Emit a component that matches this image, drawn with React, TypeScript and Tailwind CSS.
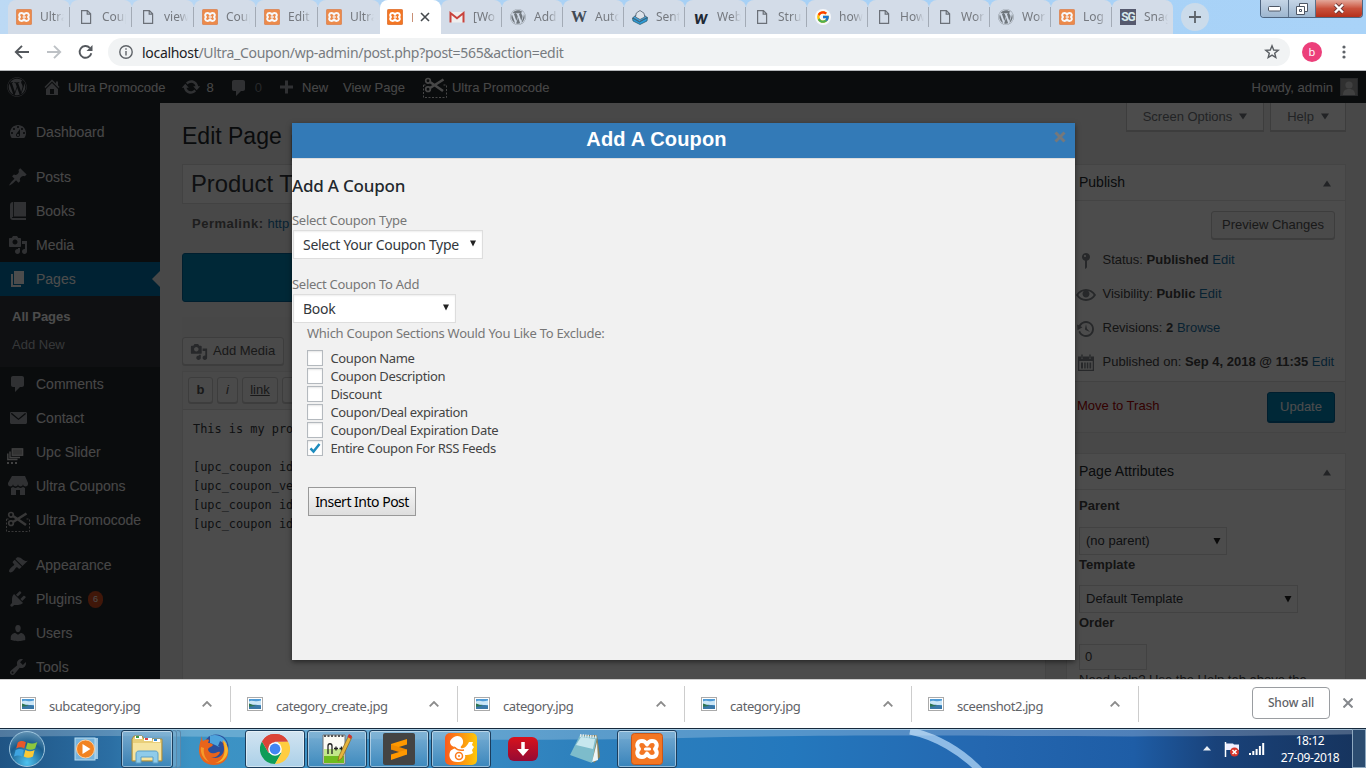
import React from "react";
import { FaWordpress } from "react-icons/fa";
import { FcGoogle } from "react-icons/fc";

const UI = "font-['Noto_Sans',sans-serif]";

const dash = {
  dashboard:
    "M3.76 16h12.48c1.1-1.37 1.76-3.11 1.76-5 0-4.42-3.58-8-8-8s-8 3.58-8 8c0 1.89.66 3.63 1.76 5zM10 4c.55 0 1 .45 1 1s-.45 1-1 1-1-.45-1-1 .45-1 1-1zM6 6c.55 0 1 .45 1 1s-.45 1-1 1-1-.45-1-1 .45-1 1-1zm8 0c.55 0 1 .45 1 1s-.45 1-1 1-1-.45-1-1 .45-1 1-1zm-5.37 5.55L12 7v6c0 1.1-.9 2-2 2s-2-.9-2-2c0-.57.24-1.08.63-1.45zM4 10c.55 0 1 .45 1 1s-.45 1-1 1-1-.45-1-1 .45-1 1-1zm12 0c.55 0 1 .45 1 1s-.45 1-1 1-1-.45-1-1 .45-1 1-1zm-5 3c0-.55-.45-1-1-1s-1 .45-1 1 .45 1 1 1 1-.45 1-1z",
  post: "M10.44 3.02l1.82-1.82 6.36 6.35-1.83 1.82c-1.05-.68-2.48-.57-3.41.36l-.75.75c-.92.93-1.04 2.35-.35 3.41l-1.83 1.82-2.41-2.41-2.8 2.79c-.42.42-3.38 2.71-3.8 2.29s1.86-3.39 2.28-3.81l2.79-2.79L4.1 9.36l1.83-1.82c1.05.69 2.48.57 3.4-.36l.75-.75c.93-.92 1.05-2.35.36-3.41z",
  book: "M5 1C3.300 1 2 2.300 2 4v12c0 1.700 1.300 3 3 3h13v-2H5c-.55 0-1-.45-1-1h1.200V1zM6 1v14.500h12V1z",
  media:
    "M13 11V4c0-.55-.45-1-1-1h-1.67L9 1H5L3.67 3H2c-.55 0-1 .45-1 1v7c0 .55.45 1 1 1h10c.55 0 1-.45 1-1zM7 4.5c1.38 0 2.5 1.12 2.5 2.5S8.38 9.5 7 9.5 4.5 8.38 4.5 7 5.62 4.5 7 4.5zM14 6h5v10.5c0 1.38-1.12 2.5-2.5 2.5S14 17.88 14 16.5s1.12-2.5 2.5-2.5c.17 0 .34.02.5.05V9h-3V6zm-4 8.05V13h2v3.5c0 1.38-1.12 2.5-2.5 2.5S7 17.88 7 16.5 8.12 14 9.5 14c.17 0 .34.02.5.05z",
  page: "M6 15V2h10v13H6zm-1 1h8v2H3V5h2v11z",
  comments:
    "M5 2h9c1.1 0 2 .9 2 2v7c0 1.1-.9 2-2 2h-2l-5 5v-5H5c-1.1 0-2-.9-2-2V4c0-1.1.9-2 2-2z",
  email:
    "M3 4h14.5c.8 0 1.5.7 1.5 1.5v9c0 .8-.7 1.5-1.5 1.5h-14c-.8 0-1.5-.7-1.5-1.5v-9C2 4.700 2.500 4 3 4zM3.300 5.300c-.4.4-.2.800 0 1L10.500 12l7.200-5.700c.2-.2.4-.6 0-1-.3-.3-.7-.1-.95.07L10.500 10.400 4.250 5.370c-.3-.2-.65-.4-.95-.07z",
  store:
    "M1 10c.41.29.96.43 1.5.43.55 0 1.09-.14 1.5-.43.62-.46 1-1.17 1-2 0 .83.37 1.54 1 2 .41.29.96.43 1.5.43.55 0 1.09-.14 1.5-.43.62-.46 1-1.17 1-2 0 .83.37 1.54 1 2 .41.29.96.43 1.51.43.54 0 1.08-.14 1.49-.43.62-.46 1-1.17 1-2 0 .83.37 1.54 1 2 .41.29.96.43 1.5.43.55 0 1.09-.14 1.5-.43.63-.46 1-1.17 1-2V7l-3-7H4L0 7v1c0 .83.37 1.54 1 2zm2 8.990h5v-5h4v5h5v-7c-.37-.05-.72-.22-1-.43-.63-.45-1-.73-1-1.56 0 .83-.38 1.11-1 1.56-.41.3-.95.43-1.49.44-.55 0-1.1-.14-1.51-.44-.63-.45-1-.73-1-1.56 0 .83-.38 1.11-1 1.56-.41.3-.95.43-1.5.44-.54 0-1.09-.14-1.5-.44-.63-.45-1-.73-1-1.570 0 .84-.38 1.120-1 1.570-.29.21-.63.38-1 .44v6.990z",
  appearance:
    "M14.48 11.06L7.41 3.99l1.5-1.5c.5-.56 2.3-.47 3.51.32 1.21.8 1.43 1.28 2.91 2.1 1.18.64 2.45 1.26 4.45.85zm-.71.71L6.7 4.7 4.93 6.47c-.39.39-.39 1.02 0 1.41l1.06 1.06c.39.39.39 1.03 0 1.42-.6.6-1.43 1.11-2.21 1.69-.35.26-.7.53-1.01.84C1.43 14.23.4 16.08 1.4 17.07c.99 1 2.84-.03 4.18-1.36.31-.31.58-.66.85-1.02.57-.78 1.08-1.61 1.69-2.21.39-.39 1.02-.39 1.41 0l1.06 1.06c.39.39 1.02.39 1.41 0z",
  plugins:
    "M13.11 4.36L9.87 7.6 8 5.73l3.24-3.24c.35-.34 1.05-.2 1.56.32.52.51.66 1.21.31 1.55zm-8 1.77l.91-1.12 9.01 9.01-1.19.84c-.71.71-2.63 1.16-3.82 1.16H6.14L4.9 17.26c-.59.59-1.54.59-2.12 0-.59-.58-.59-1.53 0-2.12l1.24-1.24v-3.88c0-1.13.4-3.19 1.09-3.89zm7.26 3.97l3.24-3.24c.34-.35 1.04-.21 1.55.31.52.51.66 1.21.31 1.55l-3.24 3.25z",
  users:
    "M10 9.25c-2.27 0-2.73-3.44-2.73-3.44C7 4.02 7.82 2 9.97 2c2.16 0 2.98 2.02 2.71 3.81 0 0-.41 3.44-2.68 3.44zm0 2.57L12.72 10c2.39 0 4.52 2.33 4.52 4.53v2.49s-3.65 1.13-7.24 1.13c-3.65 0-7.24-1.13-7.24-1.13v-2.49c0-2.25 1.94-4.48 4.47-4.48z",
  tools:
    "M16.68 9.77c-1.34 1.34-3.3 1.67-4.95.99l-5.41 6.52c-.99.99-2.59.99-3.58 0s-.99-2.59 0-3.57l6.52-5.42c-.68-1.65-.35-3.61.99-4.95 1.28-1.28 3.12-1.62 4.72-1.06l-2.89 2.89 2.82 2.82 2.86-2.87c.53 1.58.18 3.39-1.08 4.65zM3.81 16.21c.4.39 1.04.39 1.43 0 .4-.4.4-1.04 0-1.43-.39-.4-1.03-.4-1.43 0-.39.39-.39 1.03 0 1.43z",
  home: "M16 8.5l1.53 1.53-1.06 1.06L10 4.6l-6.47 6.47-1.06-1.06L10 2.5l4 4v-2h2v4zm-6-2.46l6 5.99V18H4v-5.97zM12 17v-5H8v5h4z",
  update:
    "M10.2 3.28c3.53 0 6.43 2.61 6.92 6h2.08l-3.5 4-3.5-4h2.32c-.45-1.97-2.21-3.45-4.32-3.45-1.45 0-2.73.71-3.54 1.78L4.95 5.66C6.23 4.2 8.11 3.28 10.2 3.28zm-.4 13.44c-3.52 0-6.43-2.61-6.92-6H.8l3.5-4c1.17 1.33 2.33 2.67 3.5 4H5.48c.45 1.97 2.21 3.45 4.32 3.45 1.45 0 2.73-.71 3.54-1.78l1.71 1.95c-1.28 1.46-3.15 2.38-5.25 2.38z",
  plus: "M17 8.500v3h-5v5H9v-5H4v-3h5v-5h3v5h5z",
  status:
    "M14 6c0 1.860-1.280 3.410-3 3.860V16c0 1-2 2-2 2V9.860c-1.720-.45-3-2-3-3.860 0-2.210 1.790-4 4-4s4 1.790 4 4zM8 5c0 .55.45 1 1 1s1-.45 1-1-.45-1-1-1-1 .45-1 1z",
  visibility:
    "M19.700 9.400C17.700 6 14 3.900 10 3.900S2.300 6 .3 9.400L0 10l.3.600c2 3.400 5.700 5.500 9.700 5.500s7.700-2.100 9.700-5.500l.3-.6-.3-.6zM10 14.100c-3.100 0-6-1.600-7.700-4.100C3.600 8 5.700 6.600 8 6.100c-.9.6-1.500 1.700-1.500 2.900 0 1.900 1.600 3.500 3.500 3.500s3.500-1.600 3.500-3.500c0-1.200-.6-2.300-1.500-2.900 2.300.5 4.400 1.900 5.700 3.900-1.700 2.500-4.600 4.100-7.700 4.100z",
  backup:
    "M13.65 2.88c3.93 2.01 5.48 6.84 3.47 10.77s-6.83 5.48-10.77 3.47c-1.87-.96-3.2-2.56-3.86-4.4l1.64-1.03c.45 1.57 1.52 2.95 3.08 3.76 3.01 1.54 6.69.35 8.23-2.66 1.55-3.01.36-6.69-2.65-8.24C9.78 3.01 6.1 4.2 4.56 7.21l1.88.97-4.95 3.08-.39-5.82 1.78.91C4.9 2.4 9.75.89 13.65 2.88zm-4.36 7.83C9.11 10.53 9 10.28 9 10c0-.07.03-.12.04-.19h-.01L10 5l.97 4.81L14 13l-4.5-2.12.02-.02c-.08-.04-.16-.09-.23-.15z",
  calendar:
    "M2 3.500h3v2h2v-2h6v2h2v-2h3V18H2zM3.300 8v8.700h13.400V8zM5 9.500h2V15.500H5zm3.200 0h1.500V15.500H8.200zm2.600 0h1.500V15.500h-1.500zm2.700 0h1.700V15.500h-1.700zM5.300 1.500h1.400V5H5.300zM13.300 1.500h1.400V5h-1.400z",
};

function Dash({ d, className = "text-[#a0a5aa]", size = 20 }: { d: string; className?: string; size?: number }) {
  return (
    <svg width={size} height={size} viewBox="0 0 20 20" fill="currentColor" fillRule="evenodd" className={"shrink-0 " + className}>
      <path d={d} />
    </svg>
  );
}

function ScissorsIcon({ className = "" }: { className?: string }) {
  return (
    <svg width="24" height="22" viewBox="0 0 24 22" fill="none" stroke="currentColor" className={"shrink-0 " + className}>
      <path d="M.5 8v12.500h23V8h-3M.5 8h2" strokeDasharray="2 1.500" />
      <circle cx="5" cy="3.800" r="2.300" strokeWidth="1.700" />
      <circle cx="5" cy="12.200" r="2.300" strokeWidth="1.700" />
      <path d="M7 5l5.500 3.700L20 14M7 11L20.500 2.500" strokeWidth="2.600" />
    </svg>
  );
}

function SliderIcon() {
  return (
    <svg width="18" height="17" viewBox="0 0 18 17" fill="none" className="shrink-0 text-[#dddddd]">
      <path d="M.8 5.500V11.500H10.500M3 3.500V9.500h10" stroke="currentColor" strokeWidth="1.400" />
      <rect x="5.200" y=".8" width="10.500" height="6.500" fill="#aaa" stroke="currentColor" strokeWidth="1.200" />
      <path d="M0 14h2v2H0zM4 14h2v2H4zM8 14h2v2H8z" fill="currentColor" />
    </svg>
  );
}

function Xampp({ size, faded }: { size: number; faded?: boolean }) {
  return (
    <svg width={size} height={size} viewBox="0 0 32 32" className={"shrink-0 " + (faded ? "opacity-80" : "")}>
      <rect x=".5" y=".5" width="31" height="31" rx="3" fill="#f37623" stroke="#c9571a" />
      <path
        d="M16 11.500c-1-2.200-2.500-3.500-5-3.500-5 0-6 5-3 8-3 3-2 8 3 8 2.500 0 4-1.300 5-3.500 1 2.200 2.500 3.500 5 3.500 5 0 6-5 3-8 3-3 2-8-3-8-2.500 0-4 1.300-5 3.500z"
        fill="none"
        stroke="#fff"
        strokeWidth="4"
        strokeLinejoin="round"
      />
      <path d="M14.500 16h4" stroke="#fff" strokeWidth="3.200" strokeLinecap="round" />
    </svg>
  );
}

function DocIcon() {
  return (
    <svg width="16" height="16" viewBox="0 0 16 16" fill="none" stroke="#6b7078" strokeWidth="1.200" className="shrink-0">
      <path d="M3.600 1.600h5.800l3.200 3.200v9.600h-9zM9.200 1.800v3.400h3.200" />
    </svg>
  );
}

function GmailIcon() {
  return (
    <svg width="16" height="16" viewBox="0 0 16 16" className="shrink-0">
      <path d="M1 3h14v10.500H1z" fill="#eee" />
      <path d="M1.500 13.500V4l6.500 5.300L14.500 4v9.500" fill="none" stroke="#c9433c" strokeWidth="2" />
    </svg>
  );
}

function SentIcon() {
  return (
    <svg width="16" height="16" viewBox="0 0 16 16" className="shrink-0">
      <path d="M.5 9l7 4 8-4.500-.5 3.500-7 3.500-7-3.500z" fill="#2f9bd8" stroke="#256" strokeWidth=".7" />
      <path d="M.8 8.800L4 6h8l3.200 2.500-7.700 4z" fill="#3aa6e0" stroke="#35495a" strokeWidth=".7" />
      <path d="M8 1.500l4 2.700.8 3.800L8 10.500 3.500 8l.8-4z" fill="#dde3ea" stroke="#54616f" strokeWidth=".8" />
    </svg>
  );
}

const xi = <Xampp size={16} faded />;
const doc = <DocIcon />;
const wp = <FaWordpress size={16} className="shrink-0 text-[#6f767c]" />;

const leftTabs = [
  { i: xi, t: "Ultra" },
  { i: doc, t: "Coup" },
  { i: doc, t: "view" },
  { i: xi, t: "Coup" },
  { i: xi, t: "Edit" },
  { i: xi, t: "Ultra" },
];
const rightTabs = [
  { i: <GmailIcon />, t: "[Wo" },
  { i: wp, t: "Add" },
  { i: <span className="w-4 shrink-0 text-center font-['Liberation_Serif',serif] text-[16px] leading-4 font-bold text-[#414a54]">W</span>, t: "Auto" },
  { i: <SentIcon />, t: "Sent" },
  { i: <span className="w-4 shrink-0 text-center font-['Lato',sans-serif] text-[18px] leading-[14px] font-black text-[#1f2a35] italic">w</span>, t: "Web" },
  { i: doc, t: "Stru" },
  { i: <span className="shrink-0 rounded-full bg-white/80 p-[1px]"><FcGoogle size={14} /></span>, t: "how" },
  { i: doc, t: "How" },
  { i: doc, t: "Wor" },
  { i: wp, t: "Wor" },
  { i: xi, t: "Log" },
  { i: <span className="h-4 w-4 shrink-0 bg-[#565a6e] text-center font-['Roboto',sans-serif] text-[12px] leading-4 font-bold tracking-[-1px] text-[#d7e9ec]">SG</span>, t: "Snag" },
];

function Tab({ icon, text, w, sep }: { icon: React.ReactNode; text: string; w: string; sep: boolean }) {
  return (
    <div className={"flex h-[34px] shrink-0 items-center rounded-t-[8px] bg-[#d3dce8] " + w}>
      <div className="flex flex-1 items-center gap-2 pl-2">
        {icon}
        <span className="w-[24px] overflow-hidden text-[12px] whitespace-nowrap text-[#75797f] [mask-image:linear-gradient(to_right,#000_60%,transparent)]">{text}</span>
      </div>
      {sep && <div className="h-5 w-px bg-[#a3abb6]" />}
    </div>
  );
}

function Browser() {
  return (
    <>
      <div className={"flex h-[34px] shrink-0 bg-linear-to-r from-[#bcd9f4] via-[#a6d0f5] to-[#a9d3f8] pl-2 " + UI}>
        {leftTabs.map((t, i) => (
          <Tab key={i} icon={t.i} text={t.t} w="w-[62px]" sep={i < 5} />
        ))}
        <div className="flex h-[34px] w-[61px] shrink-0 items-center rounded-t-[8px] bg-white pl-[7px]">
          <Xampp size={16} />
          <span className="ml-[9px] h-[9px] w-px bg-[#c98f75]" />
          <svg width="10" height="10" viewBox="0 0 10 10" className="ml-[7px]" stroke="#45494d" strokeWidth="1.600">
            <path d="M1 1l8 8M9 1l-8 8" />
          </svg>
        </div>
        {rightTabs.map((t, i) => (
          <Tab key={i} icon={t.i} text={t.t} w="w-[61px]" sep={i < 11} />
        ))}
        <div className="mt-[3px] ml-[8px] flex h-7 w-7 items-center justify-center rounded-full bg-[#cbdbea]">
          <svg width="12" height="12" viewBox="0 0 12 12" stroke="#5c6269" strokeWidth="1.800">
            <path d="M6 0v12M0 6h12" />
          </svg>
        </div>
        <div className="mr-[3px] ml-auto flex h-[18px] overflow-hidden rounded-b-[4px] border border-t-0 border-[#4e6580] text-white">
          <div className="flex w-[28px] items-center justify-center border-r border-[#5b7089] bg-linear-to-b from-[#c5d5e6] to-[#9db6cf]">
            <svg width="13" height="6" viewBox="0 0 13 6"><rect x=".5" y=".5" width="12" height="4.500" rx="1" fill="#fff" stroke="#4e5765" /></svg>
          </div>
          <div className="flex w-[27px] items-center justify-center border-r border-[#5b7089] bg-linear-to-b from-[#c5d5e6] to-[#9db6cf]">
            <svg width="12" height="12" viewBox="0 0 12 12" fill="#fff" stroke="#4e5765"><path d="M3.500.5h8v8h-8z" /><path d="M.5 3.500h8v8h-8z" /><path d="M3.500 6.500h2v2h-2z" /></svg>
          </div>
          <div className="flex w-[46px] items-center justify-center bg-linear-to-b from-[#e3a79a] via-[#c9513c] to-[#b5301a]">
            <svg width="12" height="11" viewBox="0 0 12 11"><path d="M2 1.500l8 8M10 1.500l-8 8" stroke="#6b3a3a" strokeWidth="4" /><path d="M2 1.500l8 8M10 1.500l-8 8" stroke="#fff" strokeWidth="2.400" /></svg>
          </div>
        </div>
      </div>
      <div className={"flex h-[37px] shrink-0 items-center border-b border-[#b4b6b9] bg-white pr-4 pl-[14px] " + UI}>
        <svg width="80" height="16" viewBox="0 0 80 16" fill="none" strokeWidth="1.900" className="shrink-0">
          <path d="M15 8H2.500M8 1.800L1.800 8 8 14.200" stroke="#54585d" />
          <path d="M33 8h12.500M40 1.800L46.200 8 40 14.200" stroke="#bdc1c5" />
          <path d="M77.300 9.200A5.900 5.900 0 1 1 75.800 3.800" stroke="#54585d" />
          <path d="M78.500 1v6h-6z" fill="#54585d" />
        </svg>
        <div className="ml-[14px] flex h-7 w-[1182px] items-center rounded-full bg-[#f1f3f4] pl-[11px]">
          <svg width="14" height="14" viewBox="0 0 14 14" fill="none" stroke="#5f6368" strokeWidth="1.400">
            <circle cx="7" cy="7" r="6.200" />
            <path d="M7 6v4.500M7 3.300v1.500" />
          </svg>
          <span className="ml-[9px] text-[14px] tracking-[-0.305px] whitespace-nowrap text-[#777b80]">
            <span className="text-[#202124]">localhost</span>/Ultra_Coupon/wp-admin/post.php?post=565&amp;action=edit
          </span>
          <svg width="16" height="16" viewBox="0 0 16 16" fill="none" stroke="#5a5e63" strokeWidth="1.400" className="mr-[10px] ml-auto">
            <path d="M8 1.800l1.700 4.200 4.500.3-3.500 2.900 1.100 4.400L8 11.200l-3.800 2.400 1.100-4.400-3.500-2.900 4.500-.3z" />
          </svg>
        </div>
        <div className="ml-3 flex h-5 w-5 items-center justify-center rounded-full bg-[#ec3f7a] text-[11px] text-white">b</div>
        <svg width="4" height="14" viewBox="0 0 4 14" fill="#5f6368" className="ml-[20px]">
          <circle cx="2" cy="2" r="1.600" /><circle cx="2" cy="7" r="1.600" /><circle cx="2" cy="12" r="1.600" />
        </svg>
      </div>
    </>
  );
}

function AdminBar() {
  return (
    <div className="flex h-8 shrink-0 items-center bg-[#23282d] pr-[8px] pl-[7px] text-[13px] whitespace-nowrap text-[#eee]">
      <FaWordpress size={20} className="text-[#a0a5aa]" />
      <Dash d={dash.home} className="ml-[15px] text-[#a0a5aa]" />
      <span className="mt-px ml-[6px]">Ultra Promocode</span>
      <Dash d={dash.update} className="ml-[15px] text-[#a0a5aa]" />
      <span className="mt-px ml-[6px]">8</span>
      <Dash d={dash.comments} className="mt-[2px] ml-[15px] text-[#a0a5aa]" />
      <span className="mt-px ml-[6px] text-[#82878c]">0</span>
      <Dash d={dash.plus} className="ml-[14px] text-[#a0a5aa]" />
      <span className="mt-px ml-[6px]">New</span>
      <span className="mt-px ml-[15px]">View Page</span>
      <ScissorsIcon className="mt-[2px] ml-[18px]" />
      <span className="mt-px ml-[5px]">Ultra Promocode</span>
      <span className="mt-px ml-auto">Howdy, admin</span>
      <svg width="18" height="18" viewBox="0 0 18 18" className="ml-[7px]">
        <rect x=".5" y=".5" width="17" height="17" fill="#a0a0a0" stroke="#82878c" />
        <circle cx="9" cy="7" r="3.600" fill="#d8d8d8" />
        <path d="M3 17c0-4 2-6 6-6s6 2 6 6z" fill="#d8d8d8" />
      </svg>
    </div>
  );
}

function MenuItem({ icon, text, active, badge }: { icon: React.ReactNode; text: string; active?: boolean; badge?: string }) {
  return (
    <div className={"relative flex h-[34px] items-center text-[14px] " + (active ? "bg-[#0073aa] text-white" : "text-[#eee]")}>
      <div className="flex w-9 justify-center">{icon}</div>
      <span>{text}</span>
      {badge && <span className="ml-[6px] h-[17px] w-[15px] rounded-full bg-[#d54e21] text-center text-[9px] leading-[17px] text-white">{badge}</span>}
      {active && <span className="absolute top-[9px] right-0 border-8 border-l-0 border-transparent border-r-[#f1f1f1]" />}
    </div>
  );
}

function Sidebar() {
  return (
    <div className="w-40 shrink-0 bg-[#23282d] pt-3">
      <MenuItem icon={<Dash d={dash.dashboard} />} text="Dashboard" />
      <div className="h-[11px]" />
      <MenuItem icon={<Dash d={dash.post} />} text="Posts" />
      <MenuItem icon={<Dash d={dash.book} />} text="Books" />
      <MenuItem icon={<Dash d={dash.media} />} text="Media" />
      <MenuItem icon={<Dash d={dash.page} className="text-white" />} text="Pages" active />
      <div className="h-[71px] bg-[#32373c] pt-[7px] pl-3 text-[13px] leading-7">
        <div className="font-bold text-white">All Pages</div>
        <div className="text-[#b4b9be]">Add New</div>
      </div>
      <MenuItem icon={<Dash d={dash.comments} />} text="Comments" />
      <MenuItem icon={<Dash d={dash.email} />} text="Contact" />
      <MenuItem icon={<div className="mt-2 -ml-[5px]"><SliderIcon /></div>} text="Upc Slider" />
      <MenuItem icon={<Dash d={dash.store} />} text="Ultra Coupons" />
      <MenuItem icon={<ScissorsIcon className="mt-1 text-[#bbb]" />} text="Ultra Promocode" />
      <div className="h-[11px]" />
      <MenuItem icon={<Dash d={dash.appearance} />} text="Appearance" />
      <MenuItem icon={<Dash d={dash.plugins} />} text="Plugins" badge="6" />
      <MenuItem icon={<Dash d={dash.users} />} text="Users" />
      <MenuItem icon={<Dash d={dash.tools} />} text="Tools" />
    </div>
  );
}

function Row({ icon, children }: { icon: string; children: React.ReactNode }) {
  return (
    <div className="flex h-[34px] items-center whitespace-nowrap">
      <Dash d={icon} className="mt-[3px] -ml-px text-[#82878c]" />
      <span className="mt-[2px] ml-[6.500px]">{children}</span>
    </div>
  );
}

function Select({ text, w }: { text: string; w: string }) {
  return (
    <div className={"flex h-[28px] items-center justify-between border border-[#ddd] bg-white pr-[5px] pl-[6px] text-[#32373c] " + w}>
      {text}
      <svg width="8" height="7" viewBox="0 0 8 7"><path d="M.5 0h7L4 6.500z" fill="#222" /></svg>
    </div>
  );
}

function BoxHead({ text }: { text: string }) {
  return (
    <div className="flex h-9 items-center justify-between border-b border-[#e5e5e5] pr-[14px] pl-3 text-[14px] text-[#23282d]">
      {text}
      <svg width="8" height="7" viewBox="0 0 8 7" className="mt-px"><path d="M0 6.500h8L4 .5z" fill="#72777c" /></svg>
    </div>
  );
}

const link = "text-[#1a73a8]";
const qt = "flex h-[26px] items-center justify-center rounded-[3px] border border-[#ccc] bg-[#f7f7f7] shadow-[0_1px_0_#ccc]";

function Main() {
  return (
    <div className="flex-1 overflow-hidden bg-[#f1f1f1] pr-5 pl-[22px] text-[13px] text-[#444]">
      <div className="flex h-[61px] items-start">
        <h1 className="mt-[19px] text-[23px] leading-[29px] text-[#23282d]">Edit Page</h1>
        <div className="mt-[31px] ml-[9px] h-7 w-20 rounded-[2px] border border-[#ccc] bg-[#f7f7f7]" />
        <div className="ml-auto flex h-[28px] w-[138px] items-center justify-center gap-[7px] border border-t-0 border-[#ccc] bg-white text-[#72777c] shadow-[0_1px_0_#ccc]">
          Screen Options
          <svg width="8" height="7" viewBox="0 0 8 7"><path d="M0 .5h8L4 6.500z" fill="currentColor" /></svg>
        </div>
        <div className="ml-[6px] flex h-[28px] w-[76px] items-center justify-center gap-[7px] border border-t-0 border-[#ccc] bg-white text-[#72777c] shadow-[0_1px_0_#ccc]">
          Help
          <svg width="8" height="7" viewBox="0 0 8 7"><path d="M0 .5h8L4 6.500z" fill="currentColor" /></svg>
        </div>
      </div>
      <div className="flex gap-5">
        <div className="w-[864px] shrink-0">
          <div className="flex h-10 items-center border border-[#ddd] bg-white pl-2 text-[23.8px] text-[#32373c]">Product T</div>
          <div className="flex h-[49px] items-start gap-1 pt-3 pl-[10px] leading-4">
            <b className="tracking-[0.5px] text-[#666]">Permalink:</b>
            <span className={link}>http</span>
          </div>
          <div className="h-[49px] rounded-[3px] border border-[#006799] bg-[#0085ba]" />
          <div className="mt-[15px] h-[54px] bg-[#ededed] pt-5">
            <div className="flex h-[28px] w-[102px] items-center gap-[2px] rounded-[3px] border border-[#ccc] bg-[#f7f7f7] pl-[7px] whitespace-nowrap text-[#555] shadow-[0_1px_0_#ccc]">
              <Dash d={dash.media} className="mt-[2px] text-[#82878c]" size={18} />
              <span className="ml-[3px]">Add Media</span>
            </div>
          </div>
          <div className="h-[320px] border border-[#e5e5e5] bg-white">
            <div className="flex h-[38px] gap-1 border-b border-[#ddd] bg-[#f5f5f5] pt-[5px] pl-[5px] text-[#555]">
              <div className={qt + " w-[25px] font-bold"}>b</div>
              <div className={qt + " w-[21px] italic"}>i</div>
              <div className={qt + " w-[36px] underline"}>link</div>
              <div className={qt + " w-[58px]"} />
            </div>
            <pre className="pt-[10px] pl-[10px] font-['DejaVu_Sans_Mono',monospace] text-[11.900px] leading-[19px] text-[#32373c]">
              {"This is my pro\n\n[upc_coupon id\n[upc_coupon_ve\n[upc_coupon id\n[upc_coupon id"}
            </pre>
          </div>
        </div>
        <div className="w-[280px] shrink-0">
          <div className="h-[269px] border border-[#e5e5e5] bg-white">
            <BoxHead text="Publish" />
            <div className="h-[180px] px-[10px] pt-[10px]">
              <div className="mb-[3px] ml-auto flex h-[28px] w-[124px] items-center justify-center rounded-[3px] border border-[#ccc] bg-[#f7f7f7] text-[#555] shadow-[0_1px_0_#ccc]">
                Preview Changes
              </div>
              <Row icon={dash.status}>Status: <b>Published</b> <span className={link}>Edit</span></Row>
              <Row icon={dash.visibility}>Visibility: <b>Public</b> <span className={link}>Edit</span></Row>
              <Row icon={dash.backup}>Revisions: <b>2</b> <span className={link}>Browse</span></Row>
              <Row icon={dash.calendar}>Published on: <b>Sep 4, 2018 @ 11:35</b> <span className={link}>Edit</span></Row>
            </div>
            <div className="flex h-[51px] items-center justify-between border-t border-[#ddd] bg-[#f5f5f5] px-[10px]">
              <span className="mb-[2px] text-[#a00]">Move to Trash</span>
              <span className="flex h-[30px] w-[68px] items-center justify-center rounded-[3px] border border-[#006799] bg-[#0085ba] text-white shadow-[0_1px_0_#006799]">Update</span>
            </div>
          </div>
          <div className="mt-[20px] h-[300px] border border-[#e5e5e5] bg-white">
            <BoxHead text="Page Attributes" />
            <div className="px-3 pt-[6px] leading-[20px]">
              <b className="block h-[31px]">Parent</b>
              <Select text="(no parent)" w="w-[148px]" />
              <b className="block h-[30px]">Template</b>
              <Select text="Default Template" w="w-[219px]" />
              <b className="block h-[31px]">Order</b>
              <div className="flex h-[26px] w-[68px] items-center border border-[#ddd] bg-white pl-[5px]">0</div>
              <div className="whitespace-nowrap">Need help? Use the Help tab above the</div>
            </div>
          </div>
        </div>
      </div>
    </div>
  );
}

const sections: [string, boolean][] = [
  ["Coupon Name", false],
  ["Coupon Description", false],
  ["Discount", false],
  ["Coupon/Deal expiration", false],
  ["Coupon/Deal Expiration Date", false],
  ["Entire Coupon For RSS Feeds", true],
];

function ModalSelect({ text, w }: { text: string; w: string }) {
  return (
    <div className={"ml-px flex h-[29px] items-center justify-between border border-[#ddd] bg-white pr-[6px] pl-[9px] text-[14px] tracking-[-0.3px] text-[#32373c] shadow-[inset_0_1px_2px_rgba(0,0,0,0.07)] " + w}>
      <span className="whitespace-nowrap">{text}</span>
      <svg width="6" height="7" viewBox="0 0 6 7" className="mb-[3px]"><path d="M0 .5h6L3 6.500z" fill="#222" /></svg>
    </div>
  );
}

function Modal() {
  return (
    <div className={"absolute top-[52px] left-[292px] h-[537px] w-[783px] bg-[#f1f1f1] shadow-[0_2px_5px_rgba(0,0,0,0.5)] " + UI}>
      <div className="flex h-[36px] items-start border-b border-[#ddd] bg-[#337ab7] bg-clip-padding pt-[6px]">
        <h2 className="w-[729px] text-center font-['Liberation_Sans',sans-serif] text-[20px] leading-5 font-bold tracking-[0.15px] text-white">Add A Coupon</h2>
        <svg width="12" height="12" viewBox="0 0 12 12" className="mt-[2px] ml-[33px]" stroke="#75787b" strokeWidth="3">
          <path d="M1.500 1.500l9 9M10.500 1.500l-9 9" />
        </svg>
      </div>
      <div className="text-[13px] tracking-[-0.28px] text-[#777]">
        <h3 className="pt-[15px] text-[17px] leading-6 font-medium tracking-[-0.2px] text-[#23282d]">Add A Coupon</h3>
        <div className="pt-[13px] leading-[18px]">Select Coupon Type</div>
        <div className="pt-px"><ModalSelect text="Select Your Coupon Type" w="w-[190px]" /></div>
        <div className="pt-[16px] leading-[18px]">Select Coupon To Add</div>
        <div className="pt-px"><ModalSelect text="Book" w="w-[163px]" /></div>
        <div className="pl-[15px]">
          <div className="pt-px leading-[18px] tracking-[-0.28px]">Which Coupon Sections Would You Like To Exclude:</div>
          <div className="pt-[7px] tracking-[-0.37px] text-[#444]">
            {sections.map(([t, c]) => (
              <div key={t} className="flex h-[18px] items-center gap-[7.500px]">
                <span className="flex h-4 w-4 items-center justify-center border border-[#b4b9be] bg-white shadow-[inset_0_1px_2px_rgba(0,0,0,0.1)]">
                  {c && <svg width="12" height="12" viewBox="0 0 12 12" fill="none"><path d="M1.500 6.300l3 3.200L10.500 2" stroke="#1e8cbe" strokeWidth="2.500" /></svg>}
                </span>
                <span className="leading-[18px]">{t}</span>
              </div>
            ))}
          </div>
          <button className="mt-[30px] ml-px flex h-[29px] w-[108px] items-center justify-center border border-[#999] bg-linear-to-b from-[#f6f6f6] to-[#dedede] text-[14px] tracking-[-0.5px] whitespace-nowrap text-black">Insert Into Post</button>
        </div>
      </div>
    </div>
  );
}

function Downloads() {
  return (
    <div className={"flex h-[49px] shrink-0 border-t border-[#cfcfcf] bg-white pl-[4px] text-[13px] tracking-[-0.45px] text-[#5f6368] " + UI}>
      {["subcategory.jpg", "category_create.jpg", "category.jpg", "category.jpg", "sceenshot2.jpg"].map((n, i) => (
        <div key={i} className="mt-[6px] flex h-9 w-[227px] items-center border-r border-[#cdcdcd] pr-[18px] pl-[16px]">
          <svg width="16" height="14" viewBox="0 0 16 14" className="mb-[1px] shrink-0">
            <rect x=".5" y=".5" width="15" height="13" fill="#fff" stroke="#aaa" />
            <rect x="2" y="2" width="12" height="10" fill="#4f9bd6" />
            <path d="M2 4.500c3-2 6 1 12-1V8H2z" fill="#cbe6f6" />
            <path d="M2 7c3 1.500 8 0 12 2v3H2z" fill="#3a78a8" />
            <path d="M2 6.500c2 .5 4 2 7 2.200l-7 1z" fill="#2d7550" />
          </svg>
          <span className="mt-[5px] ml-[13px]">{n}</span>
          <svg width="10" height="6" viewBox="0 0 10 6" fill="none" stroke="#8b8b8b" strokeWidth="1.800" className="ml-auto">
            <path d="M.7 5.300L5 1l4.300 4.300" />
          </svg>
        </div>
      ))}
      <div className="mt-[7px] ml-[113px] flex h-8 w-[78px] items-center justify-center rounded-[4px] border border-[#9a9da1] text-[12px] font-medium tracking-[-0.15px]">Show all</div>
      <svg width="10" height="10" viewBox="0 0 10 10" stroke="#85888c" strokeWidth="2" className="mt-[18px] ml-[13px]">
        <path d="M.5.5l9 9M9.500.5l-9 9" />
      </svg>
    </div>
  );
}

function Slot({ children, w, active }: { children: React.ReactNode; w: string; active?: boolean }) {
  return (
    <div
      className={
        "flex h-[38px] shrink-0 items-center justify-center rounded-[3px] border border-[#1b3d5c] shadow-[inset_0_0_0_1px_rgba(255,255,255,0.45)] " +
        (active ? "bg-linear-to-b from-[#d2e4f1] to-[#abd0e8] " : "bg-linear-to-b from-[#8ab8d8]/80 to-[#3f86b8]/60 ") + w
      }
    >
      {children}
    </div>
  );
}

function Taskbar() {
  return (
    <div className={"relative flex h-10 shrink-0 items-center overflow-hidden border-t border-[#16293c] " + UI}>
      <div className="absolute inset-0 bg-[linear-gradient(90deg,#1f5484_0%,#2b6ea3_8%,#3c93c4_14%,#3b8fc6_30%,#2e81bd_42%,#2478bd_58%,#2467b0_72%,#1e5da6_83%,#19427a_89%,#16335c_100%)]" />
      <svg width="1366" height="40" viewBox="0 0 1366 40" fill="none" className="absolute inset-0">
        <path d="M910 2c25 5 52 20 72 42" stroke="#a9cff2" strokeWidth="7" opacity=".8" />
        <path d="M0 0h1366v5c-300 6-400-2-683 4S200 4 0 8z" fill="#fff" opacity=".22" />
        <path d="M0 .5h1366" stroke="#bcd9ec" opacity=".8" />
      </svg>
      <div className="relative flex w-full items-center">
        <div className="ml-[9px] flex h-[36px] w-[36px] items-center justify-center rounded-full border border-[#9fc6de] bg-[radial-gradient(circle_at_50%_90%,#4fc3f0,#1a5c8c_55%,#7ba6c2)]">
          <svg width="26" height="26" viewBox="0 0 24 24">
            <path d="M3.500 6c3-2 5-1.500 7.500-.3L9.500 11.500C7 10.300 5 10 2 11.500z" fill="#e8572a" />
            <path d="M12.500 6c3 1.500 5.500 1.200 9-.5L19.500 11.500c-3 1.500-5.500 1.500-8.500 0z" fill="#8cc63e" />
            <path d="M1.500 13c3-1.500 5-1.200 7.500 0L7.500 19c-2.500-1.200-4.500-1.500-7.500 0z" fill="#3fa4e0" />
            <path d="M10.500 13c3 1.500 5.500 1.500 8.500 0L17.500 19c-3 1.500-5.500 1.500-8.500 0z" fill="#fcc935" />
          </svg>
        </div>
        <svg width="28" height="26" viewBox="0 0 28 26" className="ml-[29px]">
          <path d="M18 2h6v21h-6z" fill="#9cc7e4" />
          <rect x="1" y="2" width="20" height="22" fill="#76b4dd" stroke="#b7dbf0" />
          <circle cx="11.500" cy="13" r="9" fill="#f18322" stroke="#f9d1a5" />
          <path d="M8.500 8v10l8-5z" fill="#fff" />
        </svg>
        <div className="ml-[19px] flex">
          <Slot w="w-[52px]">
            <svg width="32" height="30" viewBox="0 0 32 30">
              <path d="M1 5l2-3h8l2 3h18v22H1z" fill="#e8cf7a" stroke="#a88a3c" />
              <path d="M4 2h7v3H4zM13 4h8v3h-8zM22 5h7v3h-7z" fill="#fff" />
              <path d="M5 2h3v2H5z" fill="#3d9a46" /><path d="M14 4h3v2h-3z" fill="#d44" /><path d="M23 5h3v2h-3z" fill="#38c" />
              <path d="M2 9h28v17H2z" fill="#f6e4a0" />
              <path d="M5 29v-9c0-2 1-3 3-3h16c2 0 3 1 3 3v9h-5v-6H10v6z" fill="#8fcbea" stroke="#5a9ec6" />
            </svg>
          </Slot>
          <div className="h-[38px] w-[4px] rounded-r-[3px] border border-l-0 border-[#5b88aa] bg-[#7fb0d0]/60" />
          <div className="h-[38px] w-[4px] rounded-r-[3px] border border-l-0 border-[#5b88aa] bg-[#7fb0d0]/40" />
        </div>
        <svg width="32" height="32" viewBox="0 0 32 32" className="ml-[17px]">
          <circle cx="18" cy="14" r="12.500" fill="#2a4f9c" />
          <path d="M12 3c7-3 15 1 17 8-3 3-6 1-8 3-3-2-6-3-9-4z" fill="#4da3dc" />
          <path d="M22 8l5 3-3 4-4-2z" fill="#2a4f9c" />
          <path d="M4 3c0 2 0 4 1 5 2-1 4-2 6-1l-1 3c2 0 4 .5 5 2-1 2-4 2-5 4 0 3 3 5 7 4 2-.5 3-2 5-1-1 4-5 6-9 5 7 3 13-2 13-8 0-3-1-6-2-8 5 3 7 8 6 13-1 7-7 11-14 11C7 32 1 26 1 17 1 11 3 7 4 3z" fill="#e8641b" />
          <path d="M25 7c5 4 6 10 4 15-2 5-7 8-12 8 8-2 12-9 8-23z" fill="#f7b52e" />
          <path d="M3 14c-1 6 2 12 8 15-4-4-6-9-5-14z" fill="#f59a2a" />
        </svg>
        <Slot w="ml-[15px] w-[60px]" active>
          <svg width="30" height="30" viewBox="0 0 30 30">
            <path d="M2 7.500A15 15 0 0 1 28 7.500H15z" fill="#db4437" />
            <path d="M2 7.500A15 15 0 0 0 15 30l6.500-11.200L8.500 18.800z" fill="#0f9d58" />
            <path d="M28 7.500A15 15 0 0 1 15 30l6.500-11.200L18 8z" fill="#ffcd40" />
            <path d="M15 7.500h13a15 15 0 0 0-26 0l6.500 11.300z" fill="#db4437" />
            <circle cx="15" cy="15" r="6.800" fill="#fff" /><circle cx="15" cy="15" r="5.400" fill="#4285f4" />
          </svg>
        </Slot>
        <Slot w="ml-[2px] w-[60px]">
          <svg width="32" height="32" viewBox="0 0 32 32">
            <path d="M2 2h22v29H2z" fill="#fbfbf4" stroke="#777" />
            <path d="M3 16h20v14H3z" fill="#c3e88a" /><path d="M3 23h20v7H3z" fill="#6fbb1f" />
            <path d="M3 3h20" stroke="#555" strokeDasharray="2 1.500" strokeWidth="2" />
            <path d="M7 21v-8c0-3 4-3 4 0v8M13 15.500h4M15 13.500v4M18.500 15.500h4M20.500 13.500v4" stroke="#222" strokeWidth="1.300" fill="none" />
            <path d="M28 2l3 2-10 21-4 3 1-5z" fill="#e5b43c" stroke="#8a6420" strokeWidth=".7" /><path d="M28 1l3 2-1 3-3.500-2z" fill="#c33" />
          </svg>
        </Slot>
        <Slot w="ml-[2px] w-[60px]">
          <svg width="32" height="32" viewBox="0 0 32 32">
            <rect width="32" height="32" rx="2" fill="#444" />
            <path d="M8 11L24 6v5.500L8 16.500z" fill="#ff9800" />
            <path d="M8 11.500L24 16.500V21.500L8 16.500z" fill="#f08a00" />
            <path d="M8 21.500L24 16.500V21.500L8 27z" fill="#ff9800" />
          </svg>
        </Slot>
        <Slot w="ml-[2px] w-[60px]">
          <svg width="32" height="32" viewBox="0 0 32 32">
            <defs><linearGradient id="uc" x1="0" x2="1"><stop offset="0" stopColor="#fb5a1c" /><stop offset="1" stopColor="#fdc808" /></linearGradient></defs>
            <rect width="32" height="32" rx="5" fill="url(#uc)" />
            <path d="M9 4c5-3 10 1 9 6-.5 3-3 3-2 5 3 1 6-2 8-6h4l-1 3 2 2-2 3 1 3c-3 2-6 2-8 2 1 3-1 7-6 7-8 1-11-5-9-10 1-3 5-3 6-5-3 0-6-2-6-5 0-2 2-4 4-5z" fill="#fff" />
            <circle cx="14" cy="23" r="3.500" fill="none" stroke="#fb7a1a" strokeWidth="1.500" />
            <circle cx="14" cy="23" r="1" fill="#fb7a1a" />
            <path d="M9 14c3 3 6 4 10 3" stroke="#fb7a1a" strokeWidth="1.500" fill="none" />
          </svg>
        </Slot>
        <svg width="30" height="24" viewBox="0 0 30 24" className="ml-[17px]">
          <defs><linearGradient id="dl" x2="0" y2="1"><stop offset="0" stopColor="#d8121c" /><stop offset="1" stopColor="#960a34" /></linearGradient></defs>
          <rect width="30" height="24" rx="6" fill="url(#dl)" />
          <path d="M15 5v9" stroke="#fff" strokeWidth="3.500" /><path d="M9 12h12l-6 7z" fill="#fff" />
        </svg>
        <svg width="32" height="32" viewBox="0 0 32 32" className="ml-[31px]">
          <path d="M11 2h17l3 22-6 6z" fill="#8b7f55" />
          <path d="M11 2l17 2-5 26L1 22z" fill="#7dbccb" />
          <path d="M12 4l14 2-2 10L7 12z" fill="#c7e7ee" />
          <path d="M23 29l5-20 1 18z" fill="#eef6f8" />
          <path d="M11 2.500l17 1.500" stroke="#dfe9ec" strokeDasharray="1.500 1" strokeWidth="3" />
        </svg>
        <Slot w="ml-[16px] w-[60px]"><Xampp size={32} /></Slot>
        <svg width="8" height="5" viewBox="0 0 8 5" className="ml-[526px]"><path d="M4 0l4 4.500H0z" fill="#e8eef4" /></svg>
        <svg width="16" height="16" viewBox="0 0 16 16" className="ml-[13px]">
          <path d="M1.500 1v15" stroke="#fff" strokeWidth="1.500" /><path d="M2 2.500h7l1 1h5V9H2z" fill="#eef" />
          <circle cx="10.500" cy="11" r="4.500" fill="#d9362b" /><path d="M8.500 9l4 4M12.500 9l-4 4" stroke="#fff" strokeWidth="1.500" />
        </svg>
        <svg width="16" height="12" viewBox="0 0 16 12" fill="#fff" className="ml-[9px]">
          <path d="M0 10h2v2H0zM3.300 8h2v4h-2zM6.600 6h2v6h-2zM9.900 3h2v9h-2zM13.200 0h2v12h-2z" />
        </svg>
        <div className="ml-[10px] w-[70px] text-center text-[12px] leading-[17px] tracking-[-0.4px] whitespace-nowrap text-white">
          <div>18:12</div>
          <div>27-09-2018</div>
        </div>
        <div className="ml-auto h-[39px] w-[14px] border border-[#8fa9c0] bg-[#2c4c70]" />
      </div>
    </div>
  );
}

export default function App() {
  return (
    <div className="flex h-[768px] w-[1366px] flex-col overflow-hidden bg-white">
      <Browser />
      <div className="relative flex h-[608px] shrink-0 flex-col overflow-hidden font-['Liberation_Sans',Arial,sans-serif]">
        <AdminBar />
        <div className="flex min-h-0 flex-1">
          <Sidebar />
          <Main />
        </div>
        <div className="absolute inset-0 bg-black/70" />
        <Modal />
      </div>
      <Downloads />
      <Taskbar />
    </div>
  );
}
